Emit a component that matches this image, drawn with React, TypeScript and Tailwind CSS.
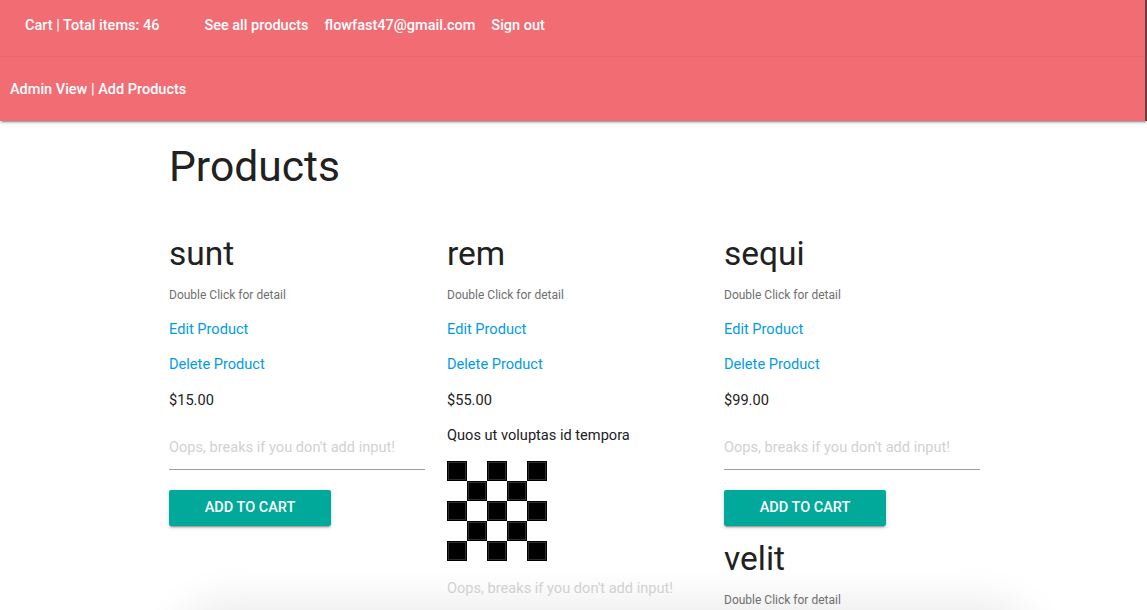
import React from "react";

const font = { fontFamily: "Roboto, 'Noto Sans', Arial, sans-serif" };

function Checker() {
  const cells: React.ReactNode[] = [];
  for (let r = 0; r < 5; r++) {
    for (let c = 0; c < 5; c++) {
      if ((r + c) % 2 === 0) {
        cells.push(
          <g key={`${r}-${c}`}>
            <rect x={c * 20} y={r * 20} width={20} height={20} fill="#000" />
            <rect x={c * 20 + 1.5} y={r * 20 + 1.5} width={17} height={17} fill="none" stroke="#3a3a3a" strokeWidth={0.8} />
          </g>
        );
      }
    }
  }
  return (
    <svg width="100" height="100" viewBox="0 0 100 100" className="block">
      <rect width="100" height="100" fill="#fff" />
      {cells}
    </svg>
  );
}

function Item({
  name,
  price,
  desc,
  image,
  button,
  first,
  partial,
}: {
  name: string;
  price?: string;
  desc?: string;
  image?: boolean;
  button?: boolean;
  first?: boolean;
  partial?: boolean;
}) {
  return (
    <div className="flex flex-col">
      <h4 className={`${first ? "mt-[45px]" : "mt-[14px]"} text-[33.5px] leading-[38px] text-[#212121]`}>{name}</h4>
      <p className="mt-[13px] text-[12px] leading-[18px] text-[#6f6f6f]">Double Click for detail</p>
      {!partial && (
        <>
          <a className="mt-[8px] text-[14.6px] leading-[35px] text-[#039be5]">Edit Product</a>
          <a className="text-[14.6px] leading-[35px] text-[#039be5]">Delete Product</a>
          <p className="mt-[1px] text-[14.6px] leading-[35px] text-[#212121]">{price}</p>
          {desc && <p className="text-[14.6px] leading-[35px] text-[#212121]">{desc}</p>}
          {image && (
            <div className="mt-[8px]">
              <Checker />
            </div>
          )}
          <input
            placeholder="Oops, breaks if you don't add input!"
            className={`${image ? "mt-[4px]" : "mt-[6px]"} h-[46px] w-[256px] border-b border-[#9e9e9e] bg-transparent text-[14.6px] outline-none placeholder:text-[#d1d1d1]`}
            style={font}
          />
          {button && (
            <button className="mt-[20px] flex h-[36px] w-[162px] items-center justify-center rounded-[2px] bg-[#00a99a] text-[14.5px] font-medium uppercase text-white shadow-[0_2px_2px_0_rgba(0,0,0,0.14),0_1px_5px_0_rgba(0,0,0,0.12),0_3px_1px_-2px_rgba(0,0,0,0.2)]">
              Add to cart
            </button>
          )}
        </>
      )}
    </div>
  );
}

export default function App() {
  return (
    <div className="relative h-[610px] w-full overflow-hidden bg-white" style={font}>
      <div className="relative z-10 border-r-2 border-[#6e3a40] shadow-[0_2px_2px_0_rgba(0,0,0,0.14),0_1px_5px_0_rgba(0,0,0,0.12),0_3px_1px_-2px_rgba(0,0,0,0.2)]">
        <nav className="flex h-[57px] items-start border-b border-[#e9676f] bg-[#f26c74] text-[14.5px] font-medium leading-[51px] text-white">
          <a className="ml-[25px]">Cart | Total items: 46</a>
          <a className="ml-[45px]">See all products</a>
          <a className="ml-[16px]">flowfast47@gmail.com</a>
          <a className="ml-[16px]">Sign out</a>
        </nav>
        <nav className="flex h-[64px] items-start bg-[#f26c74] text-[14.5px] font-medium leading-[65px] text-white">
          <a className="ml-[10px]">Admin View | Add Products</a>
        </nav>
      </div>

      <div className="absolute left-[185px] top-[614px] h-[200px] w-[840px] rounded-[40px] bg-white shadow-[0_0_45px_10px_rgba(0,0,0,0.09)]" />

      <main className="relative ml-[169px]">
        <h3 className="mt-[21px] text-[42.6px] leading-[48px] text-[#212121]">Products</h3>
        <div className="flex">
          <div className="w-[278px]">
            <Item name="sunt" price="$15.00" button first />
          </div>
          <div className="w-[277px]">
            <Item name="rem" price="$55.00" desc="Quos ut voluptas id tempora" image first />
          </div>
          <div className="w-[278px]">
            <Item name="sequi" price="$99.00" button first />
            <Item name="velit" partial />
          </div>
        </div>
      </main>
    </div>
  );
}
